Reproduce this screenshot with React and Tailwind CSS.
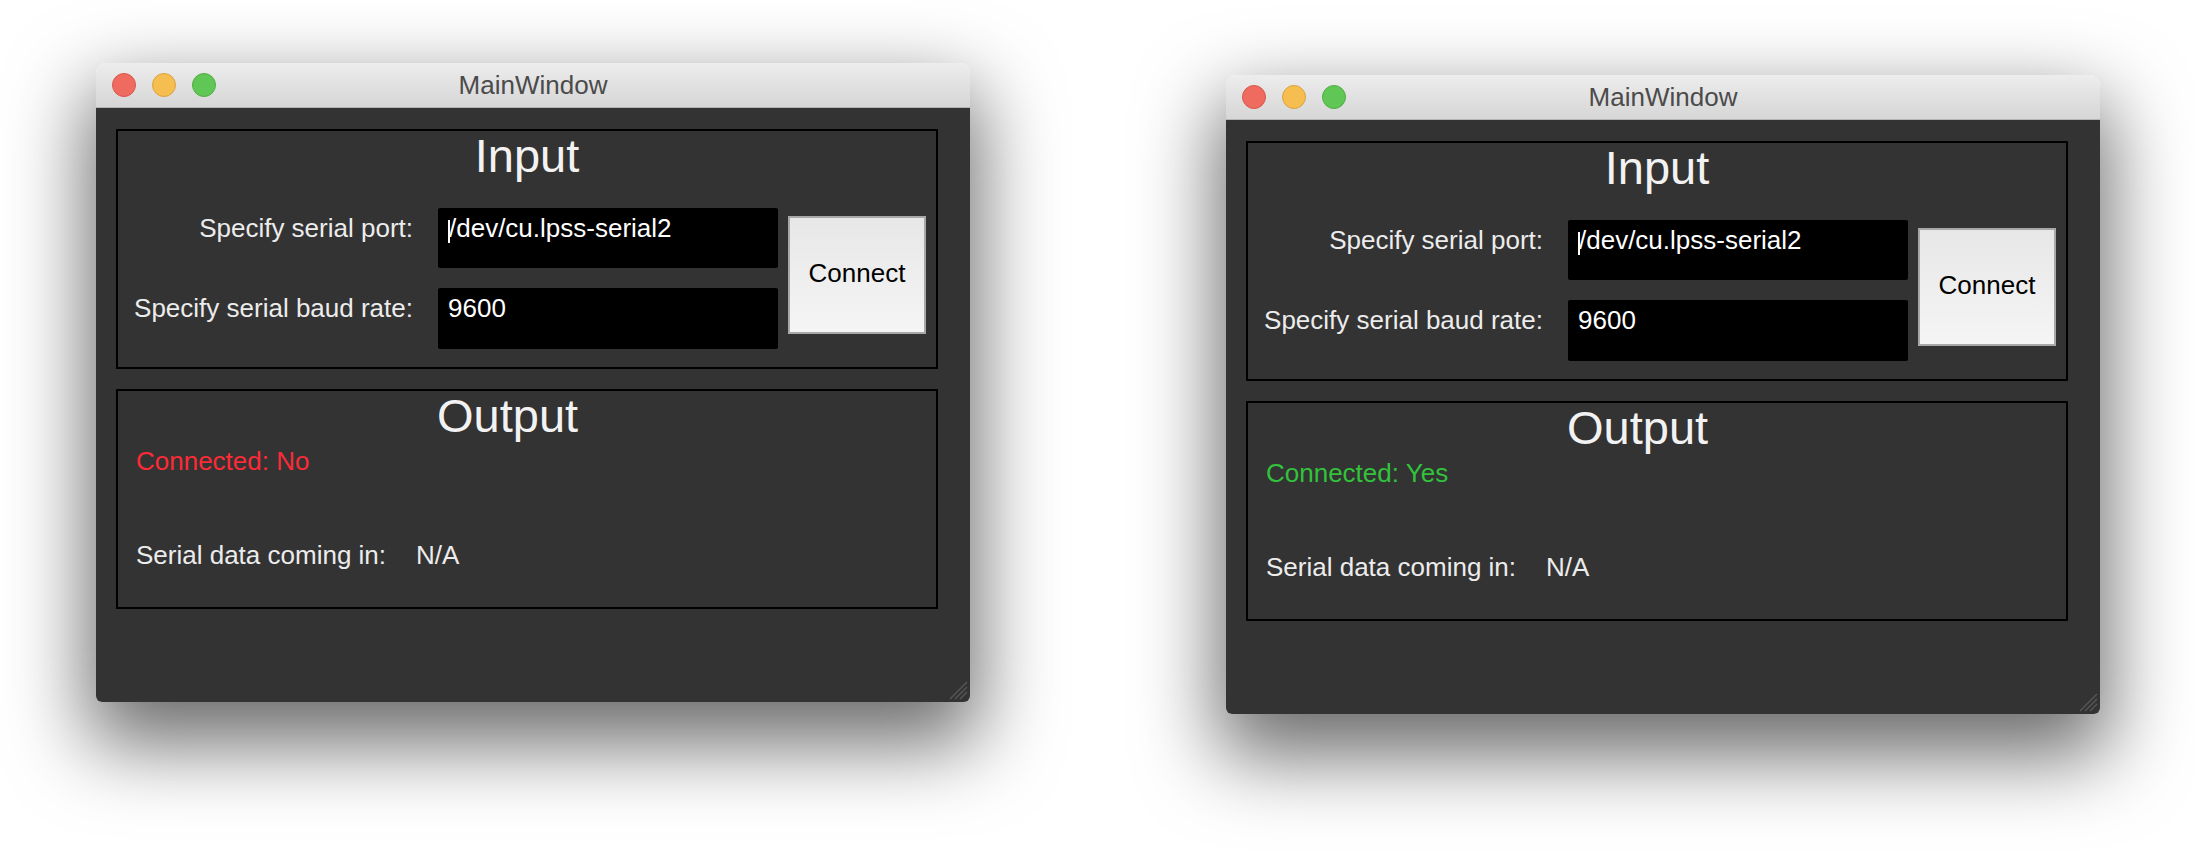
import React from "react";

const font = { fontFamily: '"Liberation Sans", Arial, Helvetica, sans-serif' };

function TrafficLights() {
  return (
    <div className="flex items-center gap-[16px] pl-[16px]">
      <div className="w-[24px] h-[24px] rounded-full bg-[#ef6b60] border border-[#d9564c]" />
      <div className="w-[24px] h-[24px] rounded-full bg-[#f6be50] border border-[#dba240]" />
      <div className="w-[24px] h-[24px] rounded-full bg-[#60c655] border border-[#4fae43]" />
    </div>
  );
}

function Field({ value, cursor }) {
  return (
    <div className="w-[340px] h-full bg-black rounded-[2px] flex items-start pl-[10px]">
      {cursor && <div className="mt-[12px] h-[23px] w-[2px] bg-white shrink-0" />}
      <div className={"pt-[7px] text-[26px] leading-none text-white whitespace-nowrap " + (cursor ? "ml-[-1px]" : "")}>{value}</div>
    </div>
  );
}

function Label({ children }) {
  return (
    <div className="w-[277px] flex justify-end pt-[7px] text-[26px] leading-none text-[#ececec] whitespace-nowrap">
      <span>{children}</span>
    </div>
  );
}

function Window({ connected }) {
  return (
    <div
      className="relative w-[874px] h-[639px] rounded-t-[10px] rounded-b-[6px] overflow-hidden flex flex-col shadow-[0_34px_80px_8px_rgba(0,0,0,0.58)]"
      style={font}
    >
      <div className="h-[45px] shrink-0 grid grid-cols-[1fr_auto_1fr] items-center bg-gradient-to-b from-[#ededed] to-[#d6d6d6] border-b border-[#b5b5b5]">
        <TrafficLights />
        <div className="text-[26px] text-[#4b4b4b] leading-none">MainWindow</div>
        <div />
      </div>
      <div className="flex-1 bg-[#333333] pl-[20px] pt-[21px]">
        {/* Input group */}
        <div className="w-[822px] h-[240px] border-2 border-black">
          <div className="pt-[1px] text-[47px] leading-none text-center text-[#f2f2f2]">Input</div>
          <div className="mt-[29px] flex items-start pl-[18px]">
            <div className="flex flex-col gap-[20px]">
              <div className="flex h-[60px] gap-[25px]">
                <Label>Specify serial port:</Label>
                <Field value="/dev/cu.lpss-serial2" cursor />
              </div>
              <div className="flex h-[61px] gap-[25px]">
                <Label>Specify serial baud rate:</Label>
                <Field value="9600" />
              </div>
            </div>
            <button className="ml-[10px] mt-[8px] w-[138px] h-[118px] border-2 border-[#a8a8a8] bg-gradient-to-b from-[#e7e7e7] to-[#f5f5f5] flex items-center justify-center pb-[4px] text-[26px] leading-none text-black">
              Connect
            </button>
          </div>
        </div>
        {/* Output group */}
        <div className="mt-[20px] w-[822px] h-[220px] border-2 border-black">
          <div className="pt-[1px] pl-[319px] text-[47px] leading-none text-[#f2f2f2]">Output</div>
          <div
            className={
              "mt-[9px] pl-[18px] text-[26px] leading-none " +
              (connected ? "text-[#32c23b]" : "text-[#fb2b37]")
            }
          >
            {connected ? "Connected: Yes" : "Connected: No"}
          </div>
          <div className="mt-[68px] pl-[18px] flex text-[26px] leading-none text-[#ececec]">
            <div className="w-[280px] whitespace-nowrap">Serial data coming in:</div>
            <div>N/A</div>
          </div>
        </div>
      </div>
      <svg className="absolute right-[2px] bottom-[2px]" width="22" height="22" viewBox="0 0 22 22">
        <line x1="4" y1="21" x2="21" y2="4" stroke="#585858" strokeWidth="1.2" />
        <line x1="9" y1="21" x2="21" y2="9" stroke="#585858" strokeWidth="1.2" />
        <line x1="14" y1="21" x2="21" y2="14" stroke="#585858" strokeWidth="1.2" />
      </svg>
    </div>
  );
}

export default function App() {
  return (
    <div className="w-[2196px] h-[862px] bg-white overflow-hidden flex items-start pl-[96px] pt-[63px]">
      <Window connected={false} />
      <div className="ml-[256px] mt-[12px]">
        <Window connected={true} />
      </div>
    </div>
  );
}
